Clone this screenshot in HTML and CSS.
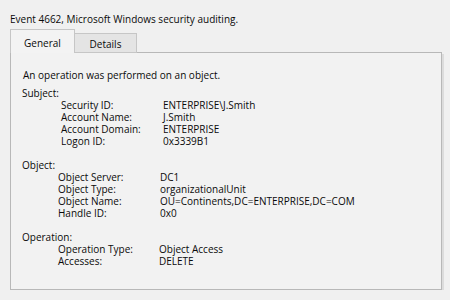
FILE: index.html
```html
<!DOCTYPE html>
<html lang="en">

<head>
  <meta charset="UTF-8" />
  <title>Event Properties</title>
  <link rel="stylesheet" href="styles.css">
</head>

<body>
  <div class="title">Event 4662, Microsoft Windows security auditing.</div>

  <div class="tabs">
    <div class="tab active">General</div>
    <div class="tab">Details</div>
  </div>

  <div class="panel">
    <p class="intro">An operation was performed on an object.</p>

    <div class="section subject">
      <div class="heading">Subject:</div>
      <div class="field"><span>Security ID:</span><span>ENTERPRISE\J.Smith</span></div>
      <div class="field"><span>Account Name:</span><span>J.Smith</span></div>
      <div class="field"><span>Account Domain:</span><span>ENTERPRISE</span></div>
      <div class="field"><span>Logon ID:</span><span>0x3339B1</span></div>
    </div>

    <div class="section">
      <div class="heading">Object:</div>
      <div class="field"><span>Object Server:</span><span>DC1</span></div>
      <div class="field"><span>Object Type:</span><span>organizationalUnit</span></div>
      <div class="field"><span>Object Name:</span><span>OU=Continents,DC=ENTERPRISE,DC=COM</span></div>
      <div class="field"><span>Handle ID:</span><span>0x0</span></div>
    </div>

    <div class="section operation">
      <div class="heading">Operation:</div>
      <div class="field"><span>Operation Type:</span><span>Object Access</span></div>
      <div class="field"><span>Accesses:</span><span>DELETE</span></div>
    </div>
  </div>
</body>

</html>
```

FILE: styles.css
```css
body {
  margin: 0;
  padding: 13px 0 0 10px;
  background-color: #f0f0f0;
  font-family: "Open Sans", sans-serif;
  font-size: 10px;
  line-height: 12px;
  color: #0a0a0a;
}

.title {
  margin-bottom: 4px;
}

.tabs {
  display: flex;
  align-items: flex-end;
  margin-bottom: -1px;
}

.tab {
  box-sizing: border-box;
  height: 20px;
  padding-top: 4px;
  width: 62px;
  text-align: center;
  background: #e4e4e4;
  border: 1px solid #c6c6c6;
  border-left: none;
}

.tab.active {
  position: relative;
  height: 24px;
  width: 65px;
  padding-top: 7px;
  background: #f3f3f3;
  border: 1px solid #c6c6c6;
  border-bottom: none;
  z-index: 1;
}

.panel {
  box-sizing: border-box;
  width: 432px;
  height: 238px;
  padding: 16px 12px 0 11px;
  background: #f2f2f2;
  border: 1px solid #b8b8b8;
  box-shadow: 2px 2px 0 #dcdcdc;
}

.intro {
  margin: 0 0 6px 1px;
}

.section {
  margin-bottom: 12px;
}

.field {
  display: grid;
  grid-template-columns: 102px auto;
  padding-left: 36px;
}

.subject .field {
  padding-left: 39px;
}

.operation .field {
  grid-template-columns: 101px auto;
}
```
